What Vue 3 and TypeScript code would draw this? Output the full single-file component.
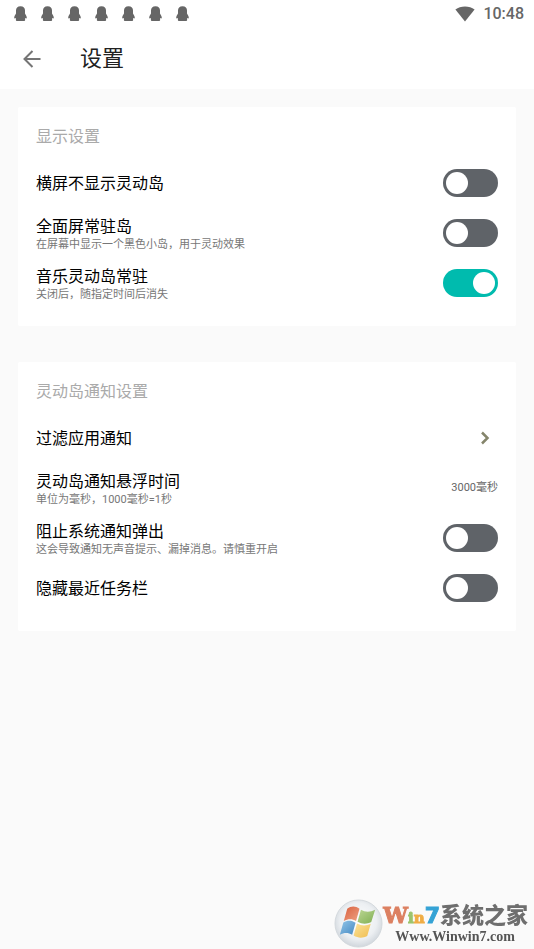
<script setup lang="ts">
import { reactive } from 'vue'

interface SettingRow {
  id: string
  title: string
  hint?: string
  kind: 'switch' | 'link' | 'value'
  on?: boolean
  value?: string
}

interface SettingGroup {
  id: string
  heading: string
  rows: SettingRow[]
}

const notificationCount = 7

const groups = reactive<SettingGroup[]>([
  {
    id: 'display',
    heading: '显示设置',
    rows: [
      { id: 'landscape', title: '横屏不显示灵动岛', kind: 'switch', on: false },
      { id: 'fullscreen', title: '全面屏常驻岛', hint: '在屏幕中显示一个黑色小岛，用于灵动效果', kind: 'switch', on: false },
      { id: 'music', title: '音乐灵动岛常驻', hint: '关闭后，随指定时间后消失', kind: 'switch', on: true },
    ],
  },
  {
    id: 'notice',
    heading: '灵动岛通知设置',
    rows: [
      { id: 'filter', title: '过滤应用通知', kind: 'link' },
      { id: 'duration', title: '灵动岛通知悬浮时间', hint: '单位为毫秒，1000毫秒=1秒', kind: 'value', value: '3000毫秒' },
      { id: 'block', title: '阻止系统通知弹出', hint: '这会导致通知无声音提示、漏掉消息。请慎重开启', kind: 'switch', on: false },
      { id: 'recents', title: '隐藏最近任务栏', kind: 'switch', on: false },
    ],
  },
])
</script>

<template>
  <div class="screen">
    <header class="top">
      <div class="status">
        <div class="notices">
          <svg v-for="n in notificationCount" :key="n" class="penguin" viewBox="0 0 14 16" aria-hidden="true">
            <path d="M6.500.3C3.500.3 2 2.200 2 4.500V7.500C1 9 .2 10.600.2 11.700c0 .9.700 1 1.700.300V14.200c0 .5.3.8 1 .8h7.200c.7 0 1-.3 1-.8V12c1 .7 1.700.600 1.700-.300 0-1.100-.8-2.700-1.800-4.200V4.500C11 2.200 9.500.3 6.500.3Z" />
          </svg>
        </div>
        <svg class="wifi" viewBox="0 0 20 16" aria-hidden="true">
          <path d="M10 15.500.400 3.600C3 1.500 6.300.5 10 .5s7 1 9.600 3.100Z" />
        </svg>
        <time class="clock">10:48</time>
      </div>
      <div class="bar">
        <button class="back" type="button" aria-label="返回">
          <svg viewBox="0 0 18 18" aria-hidden="true"><path d="M17.500 9H2M9.500 1 1.500 9l8 8" /></svg>
        </button>
        <h1>设置</h1>
      </div>
    </header>

    <main class="content">
      <section v-for="group in groups" :key="group.id" class="card">
        <h2>{{ group.heading }}</h2>
        <component
          :is="row.kind === 'switch' ? 'label' : row.kind === 'link' ? 'a' : 'div'"
          v-for="row in group.rows"
          :key="row.id"
          class="row"
          :href="row.kind === 'link' ? '#filter' : undefined"
        >
          <span class="text" :class="{ hinted: row.hint }">
            <span class="title">{{ row.title }}</span>
            <span v-if="row.hint" class="hint">{{ row.hint }}</span>
          </span>
          <input v-if="row.kind === 'switch'" v-model="row.on" class="switch" type="checkbox" role="switch" />
          <svg v-else-if="row.kind === 'link'" class="chevron" viewBox="0 0 10 14" aria-hidden="true">
            <path d="m2 1.500 5.500 5.500L2 12.500" />
          </svg>
          <span v-else class="value">{{ row.value }}</span>
        </component>
      </section>
    </main>

    <div class="watermark">
      <svg class="orb" viewBox="0 0 50 50" aria-hidden="true">
        <defs>
          <radialGradient id="glass" cx=".5" cy=".45" r=".55">
            <stop offset="0" stop-color="#fff" />
            <stop offset=".7" stop-color="#eceff2" />
            <stop offset="1" stop-color="#d0d6dc" />
          </radialGradient>
          <linearGradient id="red" x2="1" y2="1"><stop stop-color="#d9603f" /><stop offset="1" stop-color="#eea384" /></linearGradient>
          <linearGradient id="green" x2="1" y2="1"><stop stop-color="#bcd794" /><stop offset="1" stop-color="#7fae52" /></linearGradient>
          <linearGradient id="blue" x2="1" y2="1"><stop stop-color="#93c6e8" /><stop offset="1" stop-color="#4589c3" /></linearGradient>
          <linearGradient id="gold" x2="1" y2="1"><stop stop-color="#fbe39a" /><stop offset="1" stop-color="#f0bd50" /></linearGradient>
        </defs>
        <circle cx="25" cy="25" r="24" fill="url(#glass)" stroke="#d3d8dc" />
        <path d="M13.500 10c4-3 8.500-3 12.500 0l-3.500 12.500c-4-2.600-8.500-2.300-12.500 0Z" fill="url(#red)" />
        <path d="M27.500 11c4.500 2.600 9.500 2.500 14.500 0l-4 12.500c-4.700 2.400-9.500 2.200-14-.3Z" fill="url(#green)" />
        <path d="M9.500 24c4-2.500 8.500-2.500 12.500.2l-3.500 12.300c-4-2.500-8.400-2.400-12.500 0Z" fill="url(#blue)" />
        <path d="M23.500 25c4.500 2.500 9.300 2.700 14 .3l-3.600 12.500c-4.700 2.400-9.500 2.200-13.900-.5Z" fill="url(#gold)" />
      </svg>
      <div class="brand">
        <div class="name"><span class="w">W</span><span class="i">i</span><span class="n">n</span><span class="seven">7</span><span class="cn">系统之家</span></div>
        <div class="site">Www.Winwin7.com</div>
      </div>
    </div>
  </div>
</template>

<style>
body {
  background: #fafafa;
}
</style>

<style scoped>
.screen {
  min-height: 100vh;
  background: #fafafa;
  color: #000;
  font-family: Roboto, "Noto Sans CJK SC", sans-serif;
}

.top {
  background: #fff;
}

.status {
  display: flex;
  align-items: center;
  height: 28px;
  padding: 0 10px 0 14px;
  color: #666;
}

.notices {
  display: flex;
  flex: 1;
  gap: 13px;
}

.penguin {
  width: 14px;
  height: 16px;
  fill: #666;
}

.wifi {
  width: 20px;
  height: 16px;
  margin-right: 8px;
  fill: #666;
}

.clock {
  font-size: 16px;
  font-weight: 500;
  line-height: 30px;
}

.bar {
  display: flex;
  align-items: center;
  gap: 38px;
  height: 61px;
  padding-left: 22px;
}

.back {
  display: flex;
  padding: 0;
  border: 0;
  background: none;
}

.back svg {
  width: 20px;
  height: 18px;
  fill: none;
  stroke: #757575;
  stroke-width: 2;
}

h1 {
  margin: 0;
  color: #212121;
  font-size: 22px;
  font-weight: 400;
  line-height: 32px;
}

.content {
  display: flex;
  flex-direction: column;
  gap: 36px;
  padding: 18px;
}

.card {
  padding: 18px;
  border-radius: 2px;
  background: #fff;
}

h2 {
  margin: 0 0 9px;
  color: #aaa;
  font-size: 16px;
  font-weight: 400;
  line-height: 24px;
}

.row {
  display: flex;
  align-items: center;
  justify-content: space-between;
  height: 50px;
  color: inherit;
  text-decoration: none;
}

.text {
  display: flex;
  flex-direction: column;
  padding-top: 2px;
}

.text.hinted {
  padding-top: 4px;
}

.title {
  font-size: 16px;
  line-height: 20px;
}

.hint {
  color: #777;
  font-size: 11px;
  line-height: 16px;
}

.value {
  color: #666;
  font-size: 11px;
  line-height: 16px;
}

.switch {
  appearance: none;
  display: flex;
  align-items: center;
  box-sizing: border-box;
  width: 55px;
  height: 28px;
  margin: 0;
  padding: 0 3px;
  border-radius: 14px;
  background: #5f6368;
}

.switch::before {
  width: 22px;
  height: 22px;
  border-radius: 50%;
  background: #fff;
  content: "";
}

.switch:checked {
  justify-content: flex-end;
  background: #00bbae;
}

.chevron {
  width: 10px;
  height: 14px;
  margin-right: 8px;
  fill: none;
  stroke: #85856b;
  stroke-width: 2.5;
}

.watermark {
  position: fixed;
  right: 6px;
  bottom: 1px;
  display: flex;
  align-items: center;
}

.orb {
  width: 49px;
  height: 49px;
}

.name {
  display: flex;
  align-items: baseline;
  height: 26px;
  font-weight: 700;
  line-height: 26px;
}

.w,
.i,
.n {
  font-family: "DejaVu Serif", serif;
  font-size: 15px;
  -webkit-text-stroke: 1px currentColor;
}

.w {
  color: #dc8061;
  font-size: 22px;
}

.i {
  color: #9cc46c;
}

.n {
  color: #f0ad45;
}

.seven {
  color: #35a3d5;
  font-family: "DejaVu Sans", sans-serif;
  font-size: 22px;
  -webkit-text-stroke: 1px currentColor;
}

.cn {
  color: #6e6e6e;
  font-size: 22px;
  font-weight: 900;
}

.site {
  padding-left: 12px;
  color: #555;
  font-family: "Liberation Serif", serif;
  font-size: 14px;
  font-weight: 700;
  line-height: 18px;
}
</style>
